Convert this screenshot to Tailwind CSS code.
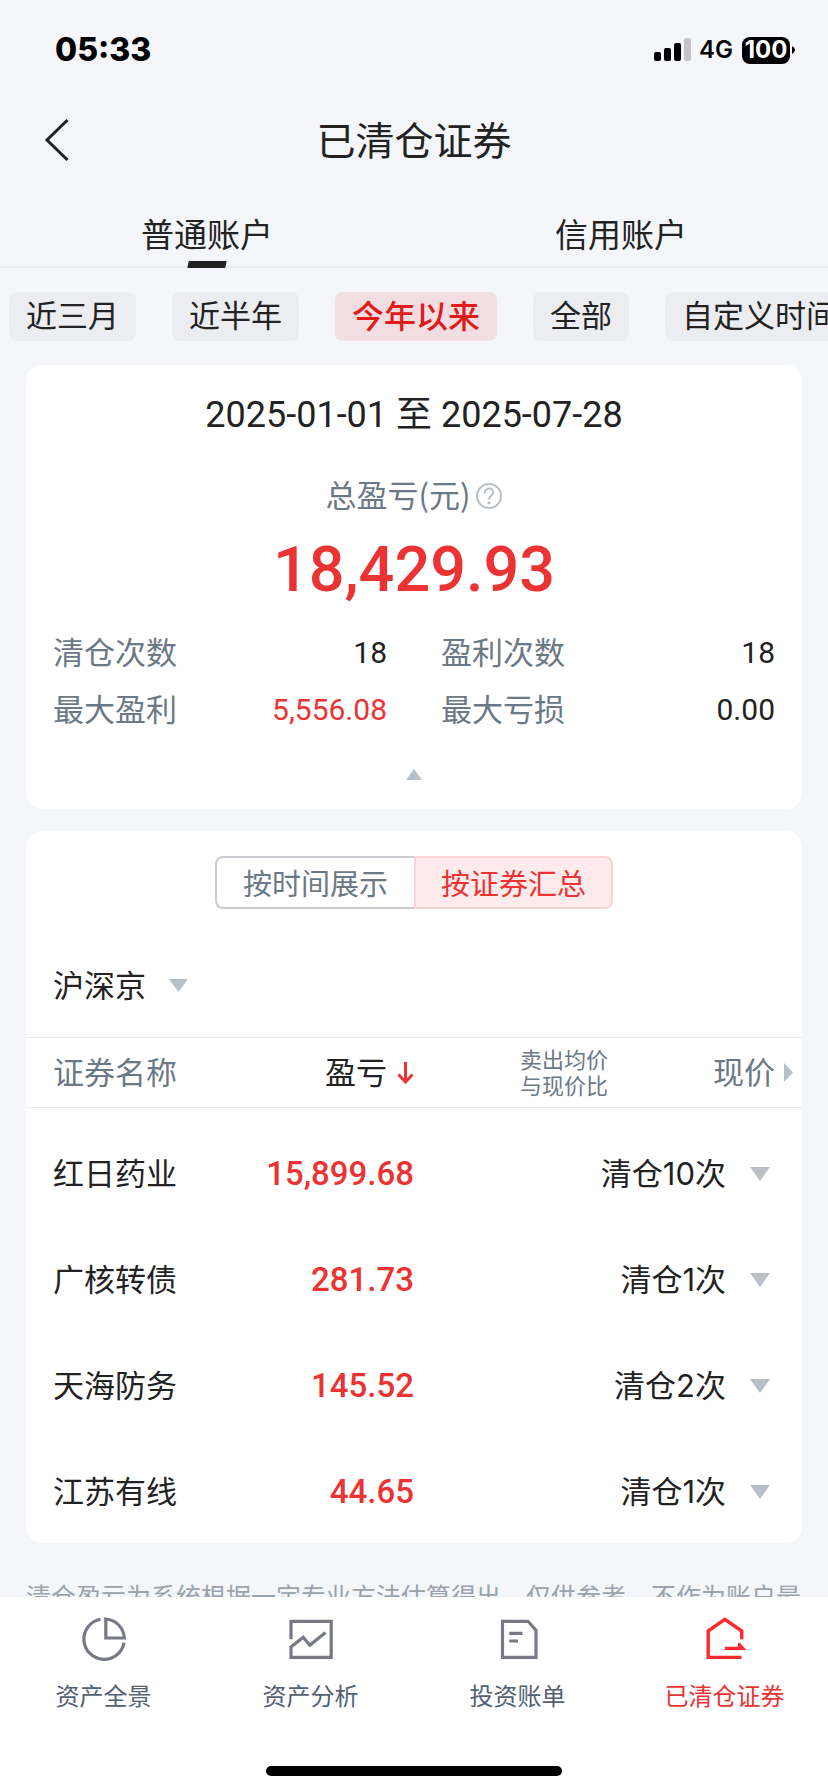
<!DOCTYPE html>
<html lang="zh-CN">
<head>
  <meta charset="UTF-8">
  <meta name="viewport" content="width=device-width, initial-scale=1.0">
  <title>已清仓证券</title>
  <script src="https://cdn.jsdelivr.net/npm/@tailwindcss/browser@4"></script>
</head>
<body class="min-h-screen overflow-x-hidden bg-[#f4f6fa] font-['Noto_Sans_CJK_SC',sans-serif] text-[31px] font-normal leading-[40px] text-[#222]">
  <!-- Status bar -->
  <div class="flex h-[100px] items-center justify-between pl-[55px] pr-[33px] font-['Inter',sans-serif] text-black">
    <span class="text-[32px] font-extrabold">05:33</span>
    <div class="flex items-center">
      <svg class="mr-[7px] h-[24px] w-[38px]" viewBox="0 0 38 24" aria-hidden="true">
        <rect x="0" y="14" width="7" height="9" rx="2"/>
        <rect x="10" y="10" width="7" height="13" rx="2"/>
        <rect x="20" y="5" width="7" height="18" rx="2"/>
        <rect x="30" y="0" width="7" height="23" rx="2" fill="#c4c3c9"/>
      </svg>
      <span class="mr-[9px] text-[24px] font-semibold">4G</span>
      <span class="flex h-[27px] w-[48px] items-center justify-center rounded-lg bg-black text-[24px] font-bold text-white">100</span>
      <svg class="ml-[2px] h-[8px] w-[3px]" viewBox="0 0 3 8" aria-hidden="true"><path d="M0 0Q3 1.500 3 4T0 8Z"/></svg>
    </div>
  </div>

  <header class="grid h-20 grid-cols-[1fr_auto_1fr] items-center px-[44px]">
    <a href="#" aria-label="返回" class="w-fit">
      <svg class="h-[44px] w-[26px]" viewBox="0 0 26 44" fill="none" stroke="#222" stroke-width="3" aria-hidden="true"><path d="M23.500 2L3 22L23.500 42"/></svg>
    </a>
    <h1 class="pb-1 text-[39px]">已清仓证券</h1>
  </header>

  <!-- Account tabs -->
  <div class="grid h-[88px] grid-cols-2 border-b-2 border-[#ebecee] text-[33px]">
    <button type="button" class="relative pt-5">普通账户
      <span class="absolute -bottom-[2px] left-1/2 h-[7px] w-[38px] -translate-x-1/2 -skew-x-12 rounded-[1px] bg-[#222]"></span>
    </button>
    <button type="button" class="pt-5">信用账户</button>
  </div>

  <!-- Period filter -->
  <div class="flex gap-[36px] overflow-hidden py-6 pl-[9px] whitespace-nowrap">
    <button type="button" class="h-[49px] shrink-0 rounded-lg bg-[#ecedf0] px-[17px] pb-[6px]">近三月</button>
    <button type="button" class="h-[49px] shrink-0 rounded-lg bg-[#ecedf0] px-[17px] pb-[6px]">近半年</button>
    <button type="button" class="h-[49px] shrink-0 rounded-lg bg-[#f2dee1] px-[17px] pb-[6px] text-[32px] font-medium text-[#e11a1a]">今年以来</button>
    <button type="button" class="h-[49px] shrink-0 rounded-lg bg-[#ecedf0] px-[17px] pb-[6px]">全部</button>
    <button type="button" class="h-[49px] shrink-0 rounded-lg bg-[#ecedf0] px-[17px] pb-[6px]">自定义时间</button>
  </div>

  <main class="mx-[26px]">
    <section class="rounded-2xl bg-white px-[27px] pt-[30px] pb-[29px]">
      <p class="text-center font-['Roboto','Noto_Sans_CJK_SC',sans-serif] text-[36px]">2025-01-01 至 2025-07-28</p>
      <div class="mt-[39px] flex items-center justify-center gap-[6px] text-[#6b7885]">
        <span>总盈亏(元)</span>
        <button type="button" aria-label="说明" class="pt-1">
          <svg class="h-[26px] w-[26px]" viewBox="0 0 26 26" fill="none" stroke="#b9bfc7" stroke-width="2" aria-hidden="true">
            <circle cx="13" cy="13" r="12"/>
            <path d="M8.700 10.500C8.700 4 17.300 4 17.300 9.600C17.300 12.800 13 12.600 13 16.500"/>
            <circle cx="13" cy="20" r="1.600" fill="#b9bfc7" stroke="none"/>
          </svg>
        </button>
      </div>
      <p class="mt-5 text-center font-['Roboto',sans-serif] text-[63px] leading-[72px] font-medium text-[#eb3333]">18,429.93</p>
      <dl class="mt-[25px] grid grid-cols-2 gap-x-[54px] gap-y-[13px]">
        <div class="flex justify-between"><dt class="text-[#6b7885]">清仓次数</dt><dd class="font-['Roboto',sans-serif] text-[30px] leading-[44px]">18</dd></div>
        <div class="flex justify-between"><dt class="text-[#6b7885]">盈利次数</dt><dd class="font-['Roboto',sans-serif] text-[30px] leading-[44px]">18</dd></div>
        <div class="flex justify-between"><dt class="text-[#6b7885]">最大盈利</dt><dd class="font-['Roboto',sans-serif] text-[30px] leading-[44px] text-[#eb3333]">5,556.08</dd></div>
        <div class="flex justify-between"><dt class="text-[#6b7885]">最大亏损</dt><dd class="font-['Roboto',sans-serif] text-[30px] leading-[44px]">0.00</dd></div>
      </dl>
      <button type="button" aria-label="收起" class="mx-auto mt-[37px] block">
        <svg class="h-[11px] w-[16px]" viewBox="0 0 16 11" fill="#b9bfc7" aria-hidden="true"><path d="M8 0L16 11H0Z"/></svg>
      </button>
    </section>

    <section class="mt-[22px] rounded-2xl bg-white pt-[25px]">
      <div class="mx-auto grid w-[398px] grid-cols-2 text-[29px]">
        <button type="button" class="h-[53px] rounded-l-lg border-2 border-r-0 border-[#c8cdd2] pb-[2px] text-[#6b7885]">按时间展示</button>
        <button type="button" class="h-[53px] rounded-r-lg border-2 border-[#fad3d4] bg-[#ffebeb] pb-[2px] text-[#eb3333]">按证券汇总</button>
      </div>

      <div class="mt-[50px] flex items-center px-[27px]">
        <div class="relative">
          <select aria-label="市场" class="h-[50px] appearance-none bg-transparent pr-[42px] leading-[50px] outline-none">
            <option>沪深京</option>
          </select>
          <svg class="pointer-events-none absolute top-5 right-0 h-[13px] w-[19px]" viewBox="0 0 19 13" fill="#b9bfc7" aria-hidden="true"><path d="M0 0H19L9.500 13Z"/></svg>
        </div>
      </div>

      <table class="mt-7 w-full table-fixed">
        <thead>
          <tr class="h-[70px] border-y border-[#e9eaec] text-[#6b7885]">
            <th scope="col" class="pb-1 pl-[27px] text-left font-normal">证券名称</th>
            <th scope="col" class="pb-1 font-normal text-[#222]">
              <button type="button" class="ml-auto flex items-center gap-[10px]">盈亏
                <svg class="mt-1 h-[22px] w-[17px]" viewBox="0 0 17 22" fill="none" stroke="#eb3333" stroke-width="3" aria-hidden="true"><path d="M8.500 0V20M1.500 12.500L8.500 20L15.500 12.500"/></svg>
              </button>
            </th>
            <th scope="col" class="pb-1 text-right text-[22px] leading-[26px] font-normal">卖出均价<br>与现价比</th>
            <th scope="col" class="pr-[9px] pb-1 font-normal">
              <span class="flex items-center justify-end gap-[9px]">现价
                <svg class="mt-1 h-[19px] w-[9px]" viewBox="0 0 9 19" fill="#b9bfc7" aria-hidden="true"><path d="M0 0L9 9.500L0 19Z"/></svg>
              </span>
            </th>
          </tr>
        </thead>
        <tbody>
          <tr><td colspan="4" class="h-[11px]"></td></tr>
          <tr class="h-[106px]">
            <td class="pl-[27px]">红日药业</td>
            <td class="pt-1 text-right font-['Roboto',sans-serif] text-[33px] font-medium text-[#eb3333]">15,899.68</td>
            <td colspan="2" class="pt-1 pr-8">
              <button type="button" class="ml-auto flex items-center gap-6 font-['Inter','Noto_Sans_CJK_SC',sans-serif]">清仓10次
                <svg class="h-[14px] w-[20px]" viewBox="0 0 20 14" fill="#b9bfc7" aria-hidden="true"><path d="M0 0H20L10 14Z"/></svg>
              </button>
            </td>
          </tr>
          <tr class="h-[106px]">
            <td class="pl-[27px]">广核转债</td>
            <td class="pt-1 text-right font-['Roboto',sans-serif] text-[33px] font-medium text-[#eb3333]">281.73</td>
            <td colspan="2" class="pt-1 pr-8">
              <button type="button" class="ml-auto flex items-center gap-6 font-['Inter','Noto_Sans_CJK_SC',sans-serif]">清仓1次
                <svg class="h-[14px] w-[20px]" viewBox="0 0 20 14" fill="#b9bfc7" aria-hidden="true"><path d="M0 0H20L10 14Z"/></svg>
              </button>
            </td>
          </tr>
          <tr class="h-[106px]">
            <td class="pl-[27px]">天海防务</td>
            <td class="pt-1 text-right font-['Roboto',sans-serif] text-[33px] font-medium text-[#eb3333]">145.52</td>
            <td colspan="2" class="pt-1 pr-8">
              <button type="button" class="ml-auto flex items-center gap-6 font-['Inter','Noto_Sans_CJK_SC',sans-serif]">清仓2次
                <svg class="h-[14px] w-[20px]" viewBox="0 0 20 14" fill="#b9bfc7" aria-hidden="true"><path d="M0 0H20L10 14Z"/></svg>
              </button>
            </td>
          </tr>
          <tr class="h-[106px]">
            <td class="pl-[27px]">江苏有线</td>
            <td class="pt-1 text-right font-['Roboto',sans-serif] text-[33px] font-medium text-[#eb3333]">44.65</td>
            <td colspan="2" class="pt-1 pr-8">
              <button type="button" class="ml-auto flex items-center gap-6 font-['Inter','Noto_Sans_CJK_SC',sans-serif]">清仓1次
                <svg class="h-[14px] w-[20px]" viewBox="0 0 20 14" fill="#b9bfc7" aria-hidden="true"><path d="M0 0H20L10 14Z"/></svg>
              </button>
            </td>
          </tr>
        </tbody>
      </table>
    </section>

    <p class="mt-[34px] text-[25px] leading-[36px] text-[#9aa3ad]">清仓盈亏为系统根据一定专业方法估算得出，仅供参考，不作为账户最终盈亏依据。</p>
  </main>

  <!-- Bottom navigation -->
  <nav class="fixed inset-x-0 bottom-0 bg-white pt-[18px] pb-4">
    <div class="grid grid-cols-4 text-[24px] leading-[36px] text-[#536171]">
      <a href="#" class="flex flex-col items-center gap-[14px]">
        <svg class="h-12 w-12" viewBox="0 0 48 48" fill="none" stroke="#777985" stroke-width="3.200" aria-hidden="true">
          <path d="M20.500 4.300A20.200 20.200 0 1 0 44 27.700"/>
          <path d="M25.800 4V23H44.300A20 20 0 0 0 25.800 4Z"/>
        </svg>
        <span>资产全景</span>
      </a>
      <a href="#" class="flex flex-col items-center gap-[14px]">
        <svg class="h-12 w-12" viewBox="0 0 48 48" fill="none" stroke="#777985" stroke-width="3.200" aria-hidden="true">
          <path d="M4 24.300V6.300H44.200V42.400H4V32L16.200 22.300L22.800 30.300L38.500 17.600"/>
        </svg>
        <span>资产分析</span>
      </a>
      <a href="#" class="flex flex-col items-center gap-[14px]">
        <svg class="h-12 w-12" viewBox="0 0 48 48" fill="none" stroke="#777985" stroke-width="3.200" aria-hidden="true">
          <path d="M8.500 6.300H34L42 15.400V42.400H8.500ZM15.200 18.300H28.500M15.200 26H24"/>
        </svg>
        <span>投资账单</span>
      </a>
      <a href="#" class="flex flex-col items-center gap-[14px] text-[#eb3333]" aria-current="page">
        <svg class="h-12 w-12" viewBox="0 0 48 48" fill="none" stroke="#ff2a30" stroke-width="3.400" aria-hidden="true">
          <path d="M40.700 24.300V16L23.800 4.400L7.200 16V42.400H40.500"/>
          <path d="M37 28H39L45.500 35H23.800V31.700H37Z" fill="#ff2a30" stroke="none"/>
        </svg>
        <span>已清仓证券</span>
      </a>
    </div>
    <div class="mx-auto mt-[53px] h-[10px] w-[296px] rounded-full bg-black"></div>
  </nav>
</body>
</html>
